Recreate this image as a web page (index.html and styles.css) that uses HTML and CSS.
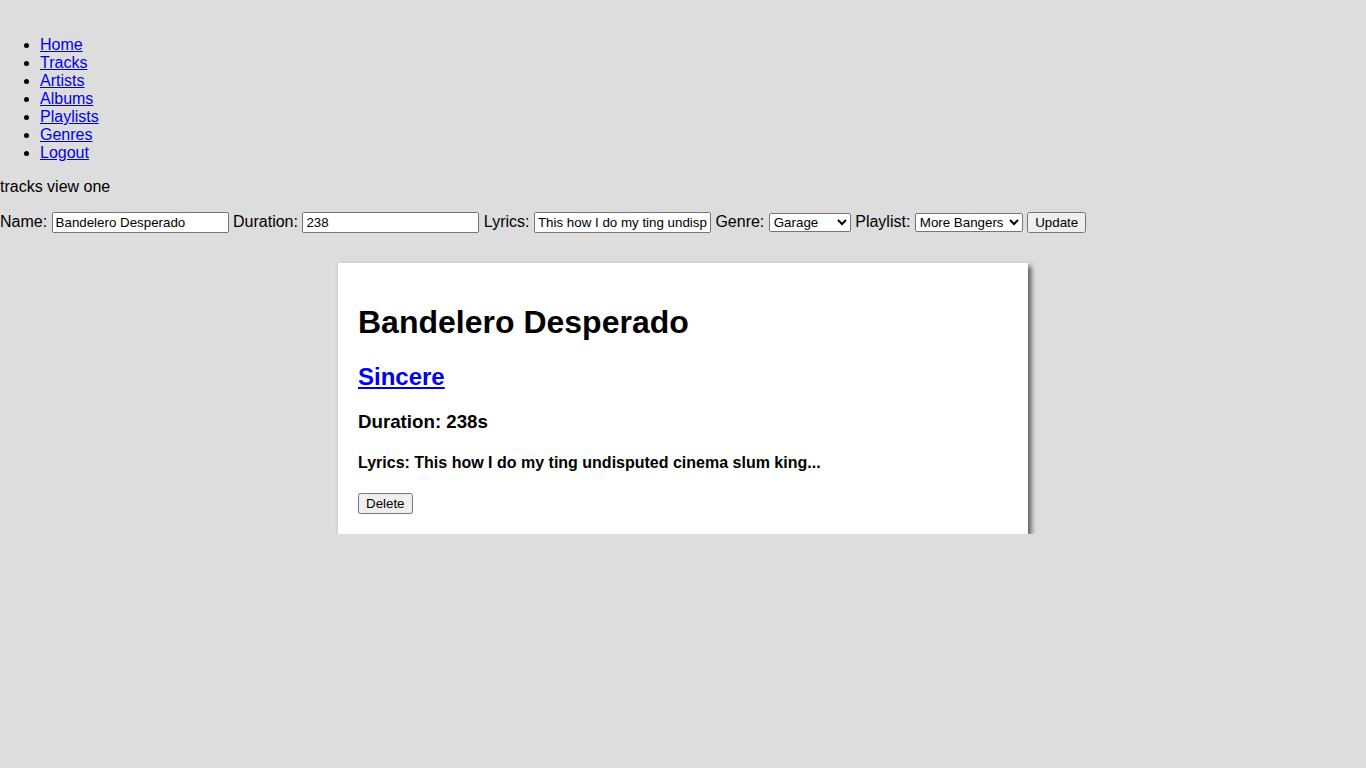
FILE: index.html
```html
<!DOCTYPE html>
<html>
<head>
<meta charset="utf-8">
<link rel="stylesheet" href="styles.css">
</head>
<body>
<nav class="nav">
  <ul class="nav-list">
    <li><a href="#">Home</a></li>
    <li><a href="#">Tracks</a></li>
    <li><a href="#">Artists</a></li>
    <li><a href="#">Albums</a></li>
    <li><a href="#">Playlists</a></li>
    <li><a href="#">Genres</a></li>
    <li><a href="#">Logout</a></li>
  </ul>
</nav>
<p class="view-title">tracks view one</p>
<form class="edit-form">
  <label>Name: <input class="text-field" type="text" value="Bandelero Desperado"></label>
  <label>Duration: <input class="text-field" type="text" value="238"></label>
  <label>Lyrics: <input class="text-field" type="text" value="This how I do my ting undisputed cinema slum king..."></label>
  <label>Genre: <select class="genre"><option>Garage</option></select></label>
  <label>Playlist: <select class="playlist"><option>More Bangers</option></select></label>
  <button type="button" class="btn-update">Update</button>
</form>
<div class="card">
  <h1>Bandelero Desperado</h1>
  <h2><a href="#">Sincere</a></h2>
  <h3>Duration: 238s</h3>
  <h4>Lyrics: This how I do my ting undisputed cinema slum king...</h4>
  <button type="button">Delete</button>
</div>
</body>
</html>
```
FILE: styles.css
```css
html, body {
  background: #dddddd;
}
body {
  margin: 0;
  font-family: "Liberation Sans", Arial, sans-serif;
  font-size: 16px;
  color: #000;
}
input, select, button {
  font-family: "Liberation Sans", Arial, sans-serif;
  font-size: 13.333px;
}
.nav {
  padding-top: 20px;
}
.nav-list {
  margin: 16px 0;
  padding-left: 40px;
}
.view-title {
  margin: 16px 0;
}
.edit-form {
  margin: 0;
}
.text-field {
  box-sizing: border-box;
  width: 177px;
}
.genre {
  box-sizing: border-box;
  width: 82px;
}
.playlist {
  box-sizing: border-box;
  width: 108px;
}
.btn-update {
  box-sizing: border-box;
  width: 59px;
}
.card {
  width: 650px;
  margin: 30px auto 0;
  padding: 20px;
  background: #ffffff;
  box-shadow: 3px 3px 5px #555555;
}
```
